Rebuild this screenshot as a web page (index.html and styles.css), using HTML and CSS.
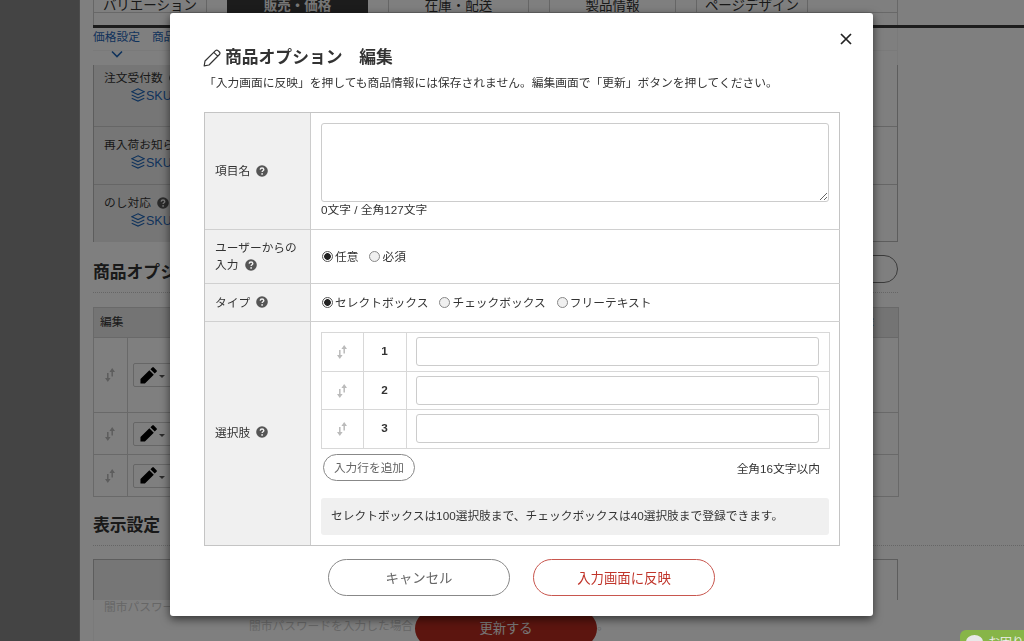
FILE: index.html
```html
<!DOCTYPE html>
<html lang="ja">
<head>
    <meta charset="UTF-8">
    <meta name="viewport" content="width=device-width, initial-scale=1.0">
    <title>商品オプション 編集</title>
    <link rel="stylesheet" href="styles.css">
</head>
<body>

    <!-- Shared icons -->
    <svg class="defs" width="0" height="0">
        <symbol id="help" viewBox="0 0 12 12">
            <circle cx="6" cy="6" r="5.8" fill="currentColor"/>
            <path d="M4.2 4.6C4.3 2.5 7.8 2.5 7.8 4.6C7.8 5.8 6.1 5.7 6.1 7.1" fill="none" stroke="#f0f0f0" stroke-width="1.4"/>
            <circle cx="6.1" cy="8.9" r=".85" fill="#f0f0f0"/>
        </symbol>
        <symbol id="sort" viewBox="0 0 10 16">
            <path d="M2.8 6v6M7.2 3v6.5" stroke="currentColor" stroke-width="1.5"/>
            <path d="M0 11h5.6L2.8 15zM4.4 5H10L7.2 1z" fill="currentColor"/>
        </symbol>
        <symbol id="layers" viewBox="0 0 14 14">
            <path d="M7 .8L13.3 3.7L7 6.6L.7 3.7zM.7 7L7 9.9L13.3 7M.7 10.2L7 13.1L13.3 10.2" fill="none" stroke="currentColor" stroke-width="1.1"/>
        </symbol>
        <symbol id="pen" viewBox="0 0 18 18">
            <path d="M.5 17.5v-4.7L9.9 3.4l4.7 4.7L5.2 17.5zM11 2.4L13 .5q.8-.8 1.6 0l2.9 2.9q.8.8 0 1.6L15.6 7z" fill="currentColor"/>
        </symbol>
    </svg>

    <!-- Page behind the dialog -->
    <div class="page">
        <div class="sidebar"></div>
        <main class="main">
            <div class="tabs">
                <div class="tab tab-1">バリエーション</div>
                <div class="tab tab-2 active">販売・価格</div>
                <div class="tab tab-3">在庫・配送</div>
                <div class="tab tab-4">製品情報</div>
                <div class="tab tab-5">ページデザイン</div>
            </div>
            <nav class="anchors">
                <a>価格設定</a>
                <a>商品情報</a>
                <svg class="chevron" viewBox="0 0 12 8"><path d="M1 1.5l5 5 5-5" fill="none" stroke="currentColor" stroke-width="1.6"/></svg>
            </nav>
            <div class="settings">
                <div class="setting tall">
                    <p>注文受付数 <svg class="help"><use href="#help"/></svg></p>
                    <p class="sku"><svg><use href="#layers"/></svg>SKU</p>
                </div>
                <div class="setting">
                    <p>再入荷お知らせ</p>
                    <p class="sku"><svg><use href="#layers"/></svg>SKU</p>
                </div>
                <div class="setting">
                    <p>のし対応 <svg class="help"><use href="#help"/></svg></p>
                    <p class="sku"><svg><use href="#layers"/></svg>SKU</p>
                </div>
            </div>
            <div class="section-head">
                <h2>商品オプション</h2>
                <div class="pill"></div>
            </div>
            <div class="options">
                <div class="options-head"><span>編集</span><span>削除</span></div>
                <div class="options-row first">
                    <div class="grip"><svg><use href="#sort"/></svg></div>
                    <div class="edit"><svg><use href="#pen"/></svg><i></i></div>
                </div>
                <div class="options-row">
                    <div class="grip"><svg><use href="#sort"/></svg></div>
                    <div class="edit"><svg><use href="#pen"/></svg><i></i></div>
                </div>
                <div class="options-row">
                    <div class="grip"><svg><use href="#sort"/></svg></div>
                    <div class="edit"><svg><use href="#pen"/></svg><i></i></div>
                </div>
            </div>
            <div class="display-head"><h2>表示設定</h2></div>
            <div class="display-table"></div>
            <div class="footer">
                <p class="ghost">闇市パスワード</p>
                <p class="ghost second">闇市パスワードを入力した場合</p>
                <div class="update">更新する</div>
                <p class="ghost third">。</p>
            </div>
        </main>
    </div>

    <div class="overlay"></div>

    <!-- Dialog -->
    <div class="modal">
        <svg class="close" viewBox="0 0 12 12"><path d="M1 1l10 10M11 1L1 11" stroke="#222" stroke-width="1.7"/></svg>
        <h1>
            <svg viewBox="0 0 18 18"><path d="M1.2 16.8l.8-4.8L12.5 1.6q1.3-1.1 2.5 0l1.4 1.4q1.1 1.2 0 2.5L6 16zM10.8 3.3l3.9 3.9" fill="none" stroke="#333" stroke-width="1.2" stroke-linejoin="round"/></svg>商品オプション　編集
        </h1>
        <p class="lead">「入力画面に反映」を押しても商品情報には保存されません。編集画面で「更新」ボタンを押してください。</p>

        <div class="form">
            <div class="label"><span>項目名 <svg class="help"><use href="#help"/></svg></span></div>
            <div class="field">
                <textarea></textarea>
                <p class="count">0文字 / 全角127文字</p>
            </div>

            <div class="label"><span>ユーザーからの<br>入力 <svg class="help"><use href="#help"/></svg></span></div>
            <div class="field radios">
                <label><input type="radio" name="required" checked>任意</label>
                <label><input type="radio" name="required">必須</label>
            </div>

            <div class="label"><span>タイプ <svg class="help"><use href="#help"/></svg></span></div>
            <div class="field radios">
                <label><input type="radio" name="type" checked>セレクトボックス</label>
                <label><input type="radio" name="type">チェックボックス</label>
                <label><input type="radio" name="type">フリーテキスト</label>
            </div>

            <div class="label"><span>選択肢 <svg class="help"><use href="#help"/></svg></span></div>
            <div class="field">
                <div class="choices">
                    <div class="choice"><div class="grip"><svg><use href="#sort"/></svg></div><b>1</b><div class="text"><input type="text"></div></div>
                    <div class="choice"><div class="grip"><svg><use href="#sort"/></svg></div><b>2</b><div class="text"><input type="text"></div></div>
                    <div class="choice"><div class="grip"><svg><use href="#sort"/></svg></div><b>3</b><div class="text"><input type="text"></div></div>
                </div>
                <div class="add-row">
                    <button class="add">入力行を追加</button>
                    <span>全角16文字以内</span>
                </div>
                <p class="note">セレクトボックスは100選択肢まで、チェックボックスは40選択肢まで登録できます。</p>
            </div>
        </div>

        <div class="actions">
            <button>キャンセル</button>
            <button class="primary">入力画面に反映</button>
        </div>
    </div>

    <!-- Chat badge -->
    <div class="chat"><i></i>お困りですか</div>

</body>
</html>
```
FILE: styles.css
```css
* {
    box-sizing: border-box;
    margin: 0;
    padding: 0;
}

body {
    width: 1024px;
    height: 641px;
    overflow: hidden;
    font-family: "Liberation Sans", "Noto Sans CJK JP", sans-serif;
    font-size: 11.73px;
    line-height: 17px;
    color: #333;
    background: #fff;
}

svg {
    flex: none;
}

.defs {
    position: absolute;
}

.help {
    width: 12px;
    height: 12px;
    margin-left: 3px;
    color: #555;
    vertical-align: -1.5px;
}

/* Page behind the dialog */
.page {
    display: flex;
    height: 641px;
    overflow: hidden;
}

.sidebar {
    width: 80px;
    flex: none;
    background: #888;
    border-right: 1px solid #999;
}

.main {
    flex: 1;
    min-width: 0;
    padding-left: 13px;
}

.tabs {
    display: flex;
    height: 28px;
    border-bottom: 3px solid #383838;
    font-size: 13.5px;
    line-height: 11px;
    text-align: center;
    background: linear-gradient(#d0d0d0, #d0d0d0) 0 12px / 805px 1px no-repeat,
        linear-gradient(#d0d0d0, #d0d0d0) 804px 0 / 1px 25px no-repeat;
}

.tab {
    height: 25px;
    margin-right: 20px;
    border: 1px solid #ccc;
    border-width: 0 1px;
    white-space: nowrap;
}

.tab-1 { width: 114px; }
.tab-2 { width: 141px; }
.tab-3 { width: 141px; }
.tab-4 { width: 127px; }
.tab-5 { width: 112px; }

.tab.active {
    color: #eee;
    background: #383838;
    border-color: #383838;
    font-weight: bold;
}

.anchors {
    display: flex;
    flex-wrap: wrap;
    align-content: flex-start;
    column-gap: 12px;
    width: 805px;
    height: 37px;
    color: #1f66b8;
    border-right: 1px solid #f4f4f4;
    background: linear-gradient(#f4f4f4, #f4f4f4) 0 22px / 100% 1px no-repeat;
}

.chevron {
    width: 12px;
    height: 8px;
    margin: 5px 700px 0 18px;
}

.settings {
    width: 805px;
    height: 177px;
    border: 1px solid #bbb;
    border-top: 0;
}

.setting {
    height: 58px;
    padding: 9px 0 0 10px;
    border-top: 1px solid #ccc;
    background: linear-gradient(#ededed, #ededed) 0 0 / 140px 100% no-repeat;
}

.setting.tall {
    height: 61px;
    padding-top: 4px;
    border-top: 0;
}

.sku {
    display: flex;
    align-items: center;
    height: 20px;
    padding-left: 27px;
    font-size: 12.5px;
    color: #1f66b8;
}

.sku svg {
    width: 14px;
    height: 14px;
    margin: -2px 1px 0 0;
}

.section-head {
    display: flex;
    align-items: center;
    justify-content: space-between;
    width: 805px;
    height: 51px;
    margin-bottom: 14px;
    padding-top: 2px;
    border-bottom: 1px dotted #ccc;
}

h2 {
    font-size: 16.8px;
    color: #333;
    line-height: 24px;
    padding-top: 10px;
}

.pill {
    width: 100px;
    height: 28px;
    margin-top: 2px;
    border: 1px solid #777;
    border-radius: 14px;
}

.options {
    width: 806px;
    border: 1px solid #d2d2d2;
}

.options-head {
    display: flex;
    justify-content: space-between;
    height: 29px;
    padding: 5px 24px 0 6px;
    background: #e8e8e8;
}

.options-row {
    display: flex;
    height: 42px;
    border-top: 1px solid #d2d2d2;
}

.options-row.first {
    height: 75px;
}

.grip {
    display: flex;
    align-items: center;
    justify-content: center;
    color: #bbb;
}

.grip svg {
    width: 10px;
    height: 16px;
    margin-right: 1px;
}

.options .grip {
    width: 34px;
    border-right: 1px solid #d2d2d2;
}

.edit {
    display: flex;
    align-items: center;
    align-self: center;
    width: 46px;
    height: 24px;
    margin-left: 5px;
    padding-left: 6px;
    border: 1px solid #ccc;
    border-radius: 2px;
    color: #000;
}

.edit svg {
    width: 17px;
    height: 17px;
}

.edit i {
    margin: 3px 0 0 2px;
    border: 3px solid transparent;
    border-top-color: #555;
    border-bottom: 0;
}

.display-head {
    height: 49px;
    padding-top: 7px;
    border-bottom: 1px dotted #ccc;
}

.display-table {
    width: 805px;
    height: 41px;
    margin-top: 13px;
    border: 1px solid #bbb;
    border-bottom: 0;
    background: linear-gradient(#ededed, #ededed) 0 0 / 135px 100% no-repeat;
}

.footer {
    display: flex;
    height: 42px;
    padding-left: 10px;
    overflow: hidden;
    white-space: nowrap;
    border-left: 1px solid #f4f4f4;
}

.ghost {
    flex: none;
    width: 145px;
    color: #cdcdcd;
    line-height: 14px;
}

.ghost.second {
    width: 166px;
    padding-top: 19px;
}

.ghost.third {
    padding-top: 19px;
}

.update {
    flex: none;
    width: 182px;
    height: 37px;
    margin-top: 10px;
    border-radius: 19px;
    background: #b82a1e;
    color: #eee;
    font-size: 13.3px;
    line-height: 37px;
    text-align: center;
}

.overlay {
    position: fixed;
    inset: 0;
    background: rgba(0, 0, 0, 0.5);
}

/* Dialog */
.modal {
    position: absolute;
    left: 170px;
    top: 13px;
    width: 703px;
    height: 603px;
    padding: 32px 34px 0;
    background: #fff;
    border-radius: 3px;
    box-shadow: 0 3px 10px rgba(0, 0, 0, 0.6);
}

.close {
    position: absolute;
    right: 21px;
    top: 20px;
    width: 12px;
    height: 12px;
}

h1 {
    display: flex;
    align-items: center;
    height: 25px;
    font-size: 16.8px;
    line-height: 25px;
    color: #333;
}

h1 svg {
    width: 18px;
    height: 18px;
    margin: 0 4px 0 -1px;
}

.lead {
    height: 42px;
    padding-top: 4px;
    font-size: 11.76px;
    white-space: nowrap;
}

.form {
    display: grid;
    grid-template-columns: 106px 1fr;
    grid-template-rows: 117px 54px 38px 223px;
    width: 636px;
    border: 1px solid #c4c4c4;
}

.label {
    display: flex;
    align-items: center;
    padding: 0 0 1px 10px;
    background: #f0f0f0;
    border-right: 1px solid #ccc;
    border-bottom: 1px solid #d0d0d0;
}

.field {
    padding: 10px;
    border-bottom: 1px solid #d0d0d0;
}

.label:nth-last-child(2),
.field:last-child {
    border-bottom: 0;
}

.label:nth-last-child(2) {
    padding-bottom: 3px;
}

textarea {
    display: block;
    width: 508px;
    height: 79px;
    border: 1px solid #ccc;
    border-radius: 3px;
}

.count {
    line-height: 15px;
}

.radios {
    display: flex;
    align-items: center;
    gap: 11px;
    padding: 0 11px;
}

.radios label {
    display: flex;
    align-items: center;
}

.radios input {
    appearance: none;
    width: 11px;
    height: 11px;
    margin-right: 2px;
    border: 1px solid #888;
    border-radius: 50%;
    background: #f0f0f0;
}

.radios input:checked {
    border-color: #555;
    background: radial-gradient(#222 0 3px, #fff 3.7px);
}

.choices {
    width: 509px;
    border: 1px solid #d8d8d8;
}

.choice {
    display: flex;
    height: 39px;
    border-bottom: 1px solid #d8d8d8;
}

.choice:nth-child(2) {
    height: 38px;
}

.choice:last-child {
    height: 38px;
    border-bottom: 0;
}

.choice .grip {
    width: 42px;
    border-right: 1px solid #d8d8d8;
}

.choice b {
    width: 43px;
    padding-right: 1px;
    border-right: 1px solid #d8d8d8;
    line-height: 36px;
    text-align: center;
}

.text {
    flex: 1;
    padding: 4px 10px 0 9px;
}

.text input {
    display: block;
    width: 100%;
    height: 29px;
    border: 1px solid #ccc;
    border-radius: 3px;
}

button {
    font-family: inherit;
    color: #666;
    background: #fff;
    border: 1px solid #888;
}

.add-row {
    display: flex;
    align-items: center;
    justify-content: space-between;
    padding: 5px 10px 0 2px;
}

.add-row span {
    padding-top: 2px;
}

.add {
    width: 92px;
    height: 27px;
    padding-bottom: 2px;
    border-radius: 14px;
    font-size: 11.7px;
}

.note {
    width: 508px;
    height: 37px;
    margin-top: 17px;
    padding-left: 10px;
    border-radius: 3px;
    background: #f0f0f0;
    line-height: 36px;
}

.actions {
    display: flex;
    justify-content: center;
    gap: 23px;
    margin-top: 13px;
}

.actions button {
    width: 182px;
    height: 37px;
    padding-bottom: 1px;
    border-radius: 19px;
    font-size: 13.4px;
}

.actions .primary {
    color: #c0352b;
    border-color: #c8564e;
}

/* Chat badge */
.chat {
    position: absolute;
    left: 960px;
    top: 630px;
    display: flex;
    width: 64px;
    height: 11px;
    padding: 5px 0 0 6px;
    gap: 5px;
    overflow: hidden;
    white-space: nowrap;
    border-radius: 6px 0 0 0;
    background: #87b548;
    color: #eee;
    font-size: 12px;
    line-height: 17px;
}

.chat i {
    flex: none;
    width: 17px;
    height: 14px;
    border-radius: 50%;
    background: #e8e8e8;
}
```
